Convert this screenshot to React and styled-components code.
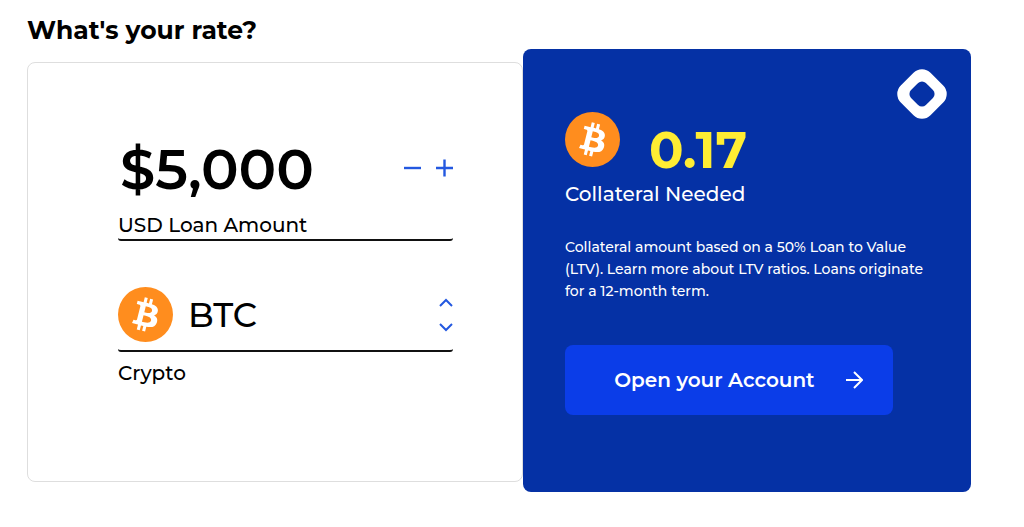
import React, { useState } from "react";
import styled, { createGlobalStyle } from "styled-components";

const GlobalStyle = createGlobalStyle`
  *, *::before, *::after { box-sizing: border-box; }
  body {
    margin: 0;
    background: #fff;
    color: #000;
    font-family: Montserrat, Inter, "Liberation Sans", sans-serif;
  }
  button, input, select { font: inherit; color: inherit; }
`;

const Page = styled.main`
  padding: 14px 53px 32px 27px;
`;

const Title = styled.h1`
  margin: 0 0 3px;
  font-size: 25px;
  line-height: 32px;
  font-weight: 700;
`;

const Calculator = styled.div`
  display: grid;
  grid-template-columns: 496fr 448fr;
`;

const LoanCard = styled.form`
  min-width: 0;
  margin: 13px 0 10px;
  padding: 74px 69px 32px 90px;
  border: 1px solid #dedede;
  border-radius: 8px;
`;

const Field = styled.div`
  display: flex;
  flex-direction: column;
  padding-bottom: ${(p) => p.$gap}px;
  border-bottom: 2px solid #111;
  border-radius: 3px;
  margin-bottom: ${(p) => p.$after}px;
`;

const FieldRow = styled.div`
  display: flex;
  align-items: center;
  gap: 15px;
`;

const Label = styled.label`
  display: block;
  font-size: 20px;
  line-height: 24px;
  font-weight: 500;
  margin-top: ${(p) => p.$top || 0}px;
`;

const AmountInput = styled.input`
  flex: 1;
  min-width: 0;
  height: 64px;
  padding: 0 0 0 2px;
  border: 0;
  outline: 0;
  background: none;
  font-size: 56px;
  font-weight: 600;
`;

const Stepper = styled.div`
  display: flex;
  gap: 12px;
`;

const StepButton = styled.button`
  display: grid;
  padding: 0;
  border: 0;
  background: none;
  color: #2358e0;
  cursor: pointer;
`;

const CryptoSelect = styled.select`
  flex: 1;
  min-width: 0;
  height: 48px;
  padding: 0;
  border: 0;
  outline: 0;
  appearance: none;
  background: none;
  font-size: 34px;
  font-weight: 500;
`;

const ArrowStack = styled.div`
  display: flex;
  flex-direction: column;
  gap: 16px;
`;

const ResultCard = styled.section`
  position: relative;
  min-width: 0;
  padding: 63px 42px 77px;
  border-radius: 8px;
  background: #0531a5;
  color: #fff;
`;

const Brand = styled.svg`
  position: absolute;
  top: 20px;
  right: 24px;
`;

const ResultRow = styled.div`
  display: flex;
  align-items: flex-start;
  gap: 29px;
`;

const ResultValue = styled.output`
  padding-top: 10px;
  font-size: 51px;
  line-height: 56px;
  font-weight: 700;
  color: #ffed33;
`;

const ResultLabel = styled.h2`
  margin: 4px 0 30px;
  font-size: 20px;
  line-height: 24px;
  font-weight: 500;
`;

const Note = styled.p`
  max-width: 364px;
  margin: 0 0 43px;
  font-size: 14px;
  line-height: 22px;
  font-weight: 500;
`;

const OpenButton = styled.button`
  display: flex;
  align-items: center;
  justify-content: flex-end;
  gap: 30px;
  width: 90%;
  height: 70px;
  padding: 0 30px 0 0;
  border: 0;
  border-radius: 8px;
  background: #0b3de8;
  font-size: 20px;
  font-weight: 600;
  cursor: pointer;
`;

const Coin = styled.svg`
  flex: none;
  display: block;
  width: 55px;
  height: 55px;
`;

function BitcoinIcon() {
  return (
    <Coin viewBox="0 0 32 32" aria-hidden="true">
      <circle cx="16" cy="16" r="16" fill="#ff8d1e" />
      <path
        fill="#fff"
        d="M23.189 14.02c.314-2.096-1.283-3.223-3.465-3.975l.708-2.84-1.728-.43-.69 2.765c-.454-.114-.92-.22-1.385-.326l.695-2.783L15.596 6l-.708 2.839c-.376-.086-.746-.17-1.104-.26l.002-.009-2.384-.595-.46 1.846s1.283.294 1.256.312c.7.175.826.638.805 1.006l-.806 3.235c.048.012.11.03.18.057l-.183-.045-1.13 4.532c-.086.212-.303.531-.793.41.018.025-1.256-.313-1.256-.313l-.858 1.978 2.25.561c.418.105.828.215 1.231.318l-.715 2.872 1.727.43.708-2.84c.472.127.93.245 1.378.357l-.706 2.828 1.728.43.715-2.866c2.948.558 5.164.333 6.097-2.333.752-2.146-.037-3.385-1.588-4.192 1.13-.26 1.98-1.003 2.207-2.538zm-3.95 5.538c-.533 2.147-4.148.986-5.32.695l.95-3.805c1.172.293 4.929.872 4.37 3.11zm.535-5.569c-.487 1.953-3.495.96-4.47.717l.86-3.45c.975.243 4.118.696 3.61 2.733z"
      />
    </Coin>
  );
}

function Stroke({ width, height, d, weight = 2 }) {
  return (
    <svg width={width} height={height} viewBox={`0 0 ${width} ${height}`} fill="none" stroke="currentColor" strokeWidth={weight} aria-hidden="true">
      <path d={d} />
    </svg>
  );
}

export default function App() {
  const [amount, setAmount] = useState(5000);
  const onType = (e) => setAmount(Number(e.target.value.replace(/\D/g, "")));

  return (
    <>
      <GlobalStyle />
      <Page>
        <Title>What's your rate?</Title>
        <Calculator>
          <LoanCard>
            <Field $gap={2} $after={46}>
              <FieldRow>
                <AmountInput id="amount" value={"$" + amount.toLocaleString("en-US")} onChange={onType} />
                <Stepper>
                  <StepButton type="button" aria-label="Decrease amount" onClick={() => setAmount(Math.max(0, amount - 1000))}>
                    <Stroke width={20} height={20} d="M1 9H18" weight={2.4} />
                  </StepButton>
                  <StepButton type="button" aria-label="Increase amount" onClick={() => setAmount(amount + 1000)}>
                    <Stroke width={18} height={20} d="M1 9H18M9.5 0.5V17.5" weight={2.4} />
                  </StepButton>
                </Stepper>
              </FieldRow>
              <Label htmlFor="amount" $top={12}>USD Loan Amount</Label>
            </Field>
            <Field $gap={8} $after={9}>
              <FieldRow>
                <BitcoinIcon />
                <CryptoSelect id="crypto" defaultValue="BTC">
                  <option>BTC</option>
                </CryptoSelect>
                <ArrowStack>
                  <StepButton type="button" aria-label="Previous crypto">
                    <Stroke width={14} height={9} d="M1 8L7 2L13 8" />
                  </StepButton>
                  <StepButton type="button" aria-label="Next crypto">
                    <Stroke width={14} height={9} d="M1 1L7 7L13 1" />
                  </StepButton>
                </ArrowStack>
              </FieldRow>
            </Field>
            <Label htmlFor="crypto">Crypto</Label>
          </LoanCard>
          <ResultCard>
            <Brand width="50" height="50" viewBox="0 0 50 50" aria-hidden="true">
              <g transform="rotate(45 25 25)">
                <rect x="4" y="4" width="42" height="42" rx="12" fill="#fff" />
                <rect x="14.5" y="14.5" width="21" height="21" rx="5.5" fill="#0531a5" />
              </g>
            </Brand>
            <ResultRow>
              <BitcoinIcon />
              <ResultValue htmlFor="amount crypto">0.17</ResultValue>
            </ResultRow>
            <ResultLabel>Collateral Needed</ResultLabel>
            <Note>
              Collateral amount based on a 50% Loan to Value (LTV). Learn more about LTV ratios. Loans originate for a
              12-month term.
            </Note>
            <OpenButton type="button">
              Open your Account
              <Stroke width={18} height={18} d="M1 9H16M9 1L17 9L9 17" />
            </OpenButton>
          </ResultCard>
        </Calculator>
      </Page>
    </>
  );
}
